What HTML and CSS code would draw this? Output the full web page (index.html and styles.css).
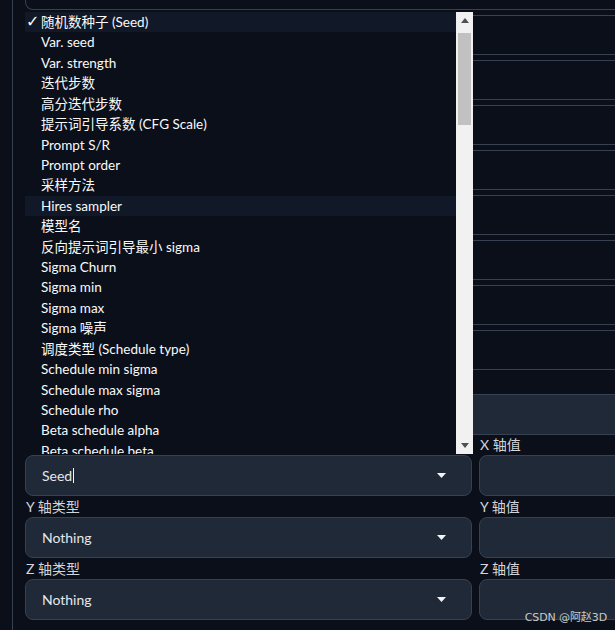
FILE: index.html
```html
<!DOCTYPE html>
<html lang="zh">
<head>
<meta charset="utf-8">
<link rel="stylesheet" href="styles.css">
</head>
<body>
<div class="page">
  <div class="content">
    <div class="topbox"></div>
    <div class="rows">
      <div class="rowbox"></div>
      <div class="rowbox"></div>
      <div class="rowbox"></div>
      <div class="rowbox"></div>
      <div class="rowbox"></div>
      <div class="rowbox"></div>
      <div class="rowbox"></div>
      <div class="rowbox"></div>
    </div>
    <div class="filled"></div>
    <div class="grid">
      <div class="field">
        <div class="label">X 轴类型</div>
        <div class="select"><span class="value">Seed</span><span class="cursor"></span><svg class="caret" width="9" height="5" viewBox="0 0 9 5"><path d="M0 0H9L4.5 5Z" fill="#f3f4f6"/></svg></div>
      </div>
      <div class="field">
        <div class="label">X 轴值</div>
        <div class="input"></div>
      </div>
      <div class="field">
        <div class="label">Y 轴类型</div>
        <div class="select"><span class="value">Nothing</span><svg class="caret" width="9" height="5" viewBox="0 0 9 5"><path d="M0 0H9L4.5 5Z" fill="#f3f4f6"/></svg></div>
      </div>
      <div class="field">
        <div class="label">Y 轴值</div>
        <div class="input"></div>
      </div>
      <div class="field">
        <div class="label">Z 轴类型</div>
        <div class="select"><span class="value">Nothing</span><svg class="caret" width="9" height="5" viewBox="0 0 9 5"><path d="M0 0H9L4.5 5Z" fill="#f3f4f6"/></svg></div>
      </div>
      <div class="field">
        <div class="label">Z 轴值</div>
        <div class="input"></div>
      </div>
    </div>

    <div class="listbox">
      <ul class="options">
        <li class="opt selected"><span class="check">✓</span>随机数种子 (Seed)</li>
        <li class="opt">Var. seed</li>
        <li class="opt">Var. strength</li>
        <li class="opt">迭代步数</li>
        <li class="opt">高分迭代步数</li>
        <li class="opt">提示词引导系数 (CFG Scale)</li>
        <li class="opt">Prompt S/R</li>
        <li class="opt">Prompt order</li>
        <li class="opt">采样方法</li>
        <li class="opt hover">Hires sampler</li>
        <li class="opt">模型名</li>
        <li class="opt">反向提示词引导最小 sigma</li>
        <li class="opt">Sigma Churn</li>
        <li class="opt">Sigma min</li>
        <li class="opt">Sigma max</li>
        <li class="opt">Sigma 噪声</li>
        <li class="opt">调度类型 (Schedule type)</li>
        <li class="opt">Schedule min sigma</li>
        <li class="opt">Schedule max sigma</li>
        <li class="opt">Schedule rho</li>
        <li class="opt">Beta schedule alpha</li>
        <li class="opt">Beta schedule beta</li>
      </ul>
      <div class="scrollbar">
        <div class="sb-btn"><svg width="8" height="5" viewBox="0 0 8 5"><path d="M0 5H8L4 0Z" fill="#505050"/></svg></div>
        <div class="sb-track"><div class="sb-thumb"></div></div>
        <div class="sb-btn"><svg width="8" height="5" viewBox="0 0 8 5"><path d="M0 0H8L4 5Z" fill="#505050"/></svg></div>
      </div>
    </div>
  </div>
  <div class="watermark">CSDN @阿赵3D</div>
</div>
</body>
</html>
```
FILE: styles.css
```css
* { box-sizing: border-box; }
html, body {
  margin: 0;
  padding: 0;
  background: #0b0f19;
  width: 615px;
  height: 630px;
  overflow: hidden;
  font-family: "Lato", "Noto Sans CJK SC", sans-serif;
  color: #e5e7eb;
}
.page {
  position: relative;
  margin-left: 12px;
  border-left: 1px solid #374151;
  padding-left: 12px;
  height: 630px;
}
.content {
  position: relative;
  width: 901px;
}
.topbox {
  height: 10px;
  border: 1px solid #374151;
  border-top: 0;
  border-radius: 0 0 8px 8px;
}
.rows {
  display: flex;
  flex-direction: column;
  gap: 5px;
  padding-top: 5px;
}
.rowbox {
  height: 40px;
  border: 1px solid #374151;
  border-radius: 6px;
}
.filled {
  margin-top: 24px;
  height: 41px;
  background: #1f2937;
  border: 1px solid #374151;
  border-radius: 6px;
}
.grid {
  display: grid;
  grid-template-columns: 447px 447px;
  column-gap: 7px;
  row-gap: 1px;
}
.field {
  display: flex;
  flex-direction: column;
}
.label {
  height: 20px;
  line-height: 20px;
  font-size: 14px;
  color: #d1d5db;
  padding-left: 1px;
}
.select, .input {
  height: 41px;
  background: #1f2937;
  border: 1px solid #374151;
  border-radius: 8px;
}
.select {
  display: flex;
  align-items: center;
  padding-left: 16px;
  padding-right: 25px;
  font-size: 14px;
  color: #e5e7eb;
}
.value { line-height: 20px; }
.cursor {
  width: 1px;
  height: 15px;
  background: #f3f4f6;
  margin-left: 1px;
}
.caret { margin-left: auto; }
.listbox {
  position: absolute;
  left: 0;
  top: 12px;
  width: 448px;
  height: 442px;
  background: #0b0f19;
  display: flex;
  overflow: hidden;
}
.options {
  list-style: none;
  margin: 0;
  padding: 0;
  flex: 1;
}
.opt {
  position: relative;
  height: 20.43px;
  line-height: 20.43px;
  padding-left: 16px;
  font-size: 13.5px;
  color: #f9fafb;
  white-space: nowrap;
}
.opt.selected, .opt.hover { background: #111827; }
.check {
  position: absolute;
  left: 1px;
  top: 0;
  font-family: "DejaVu Sans", sans-serif;
  font-size: 16px;
}
.scrollbar {
  width: 17px;
  background: #f1f1f1;
  display: flex;
  flex-direction: column;
}
.sb-btn {
  height: 17px;
  display: flex;
  align-items: center;
  justify-content: center;
}
.sb-track {
  flex: 1;
  padding: 4px 2px 0 2px;
}
.sb-thumb {
  height: 92px;
  background: #c1c1c1;
}
.watermark {
  position: absolute;
  right: 8px;
  bottom: 6px;
  font-family: "DejaVu Sans", "Noto Sans CJK SC", sans-serif;
  font-size: 11px;
  color: #c9c9c9;
  letter-spacing: -0.1px;
}
```
